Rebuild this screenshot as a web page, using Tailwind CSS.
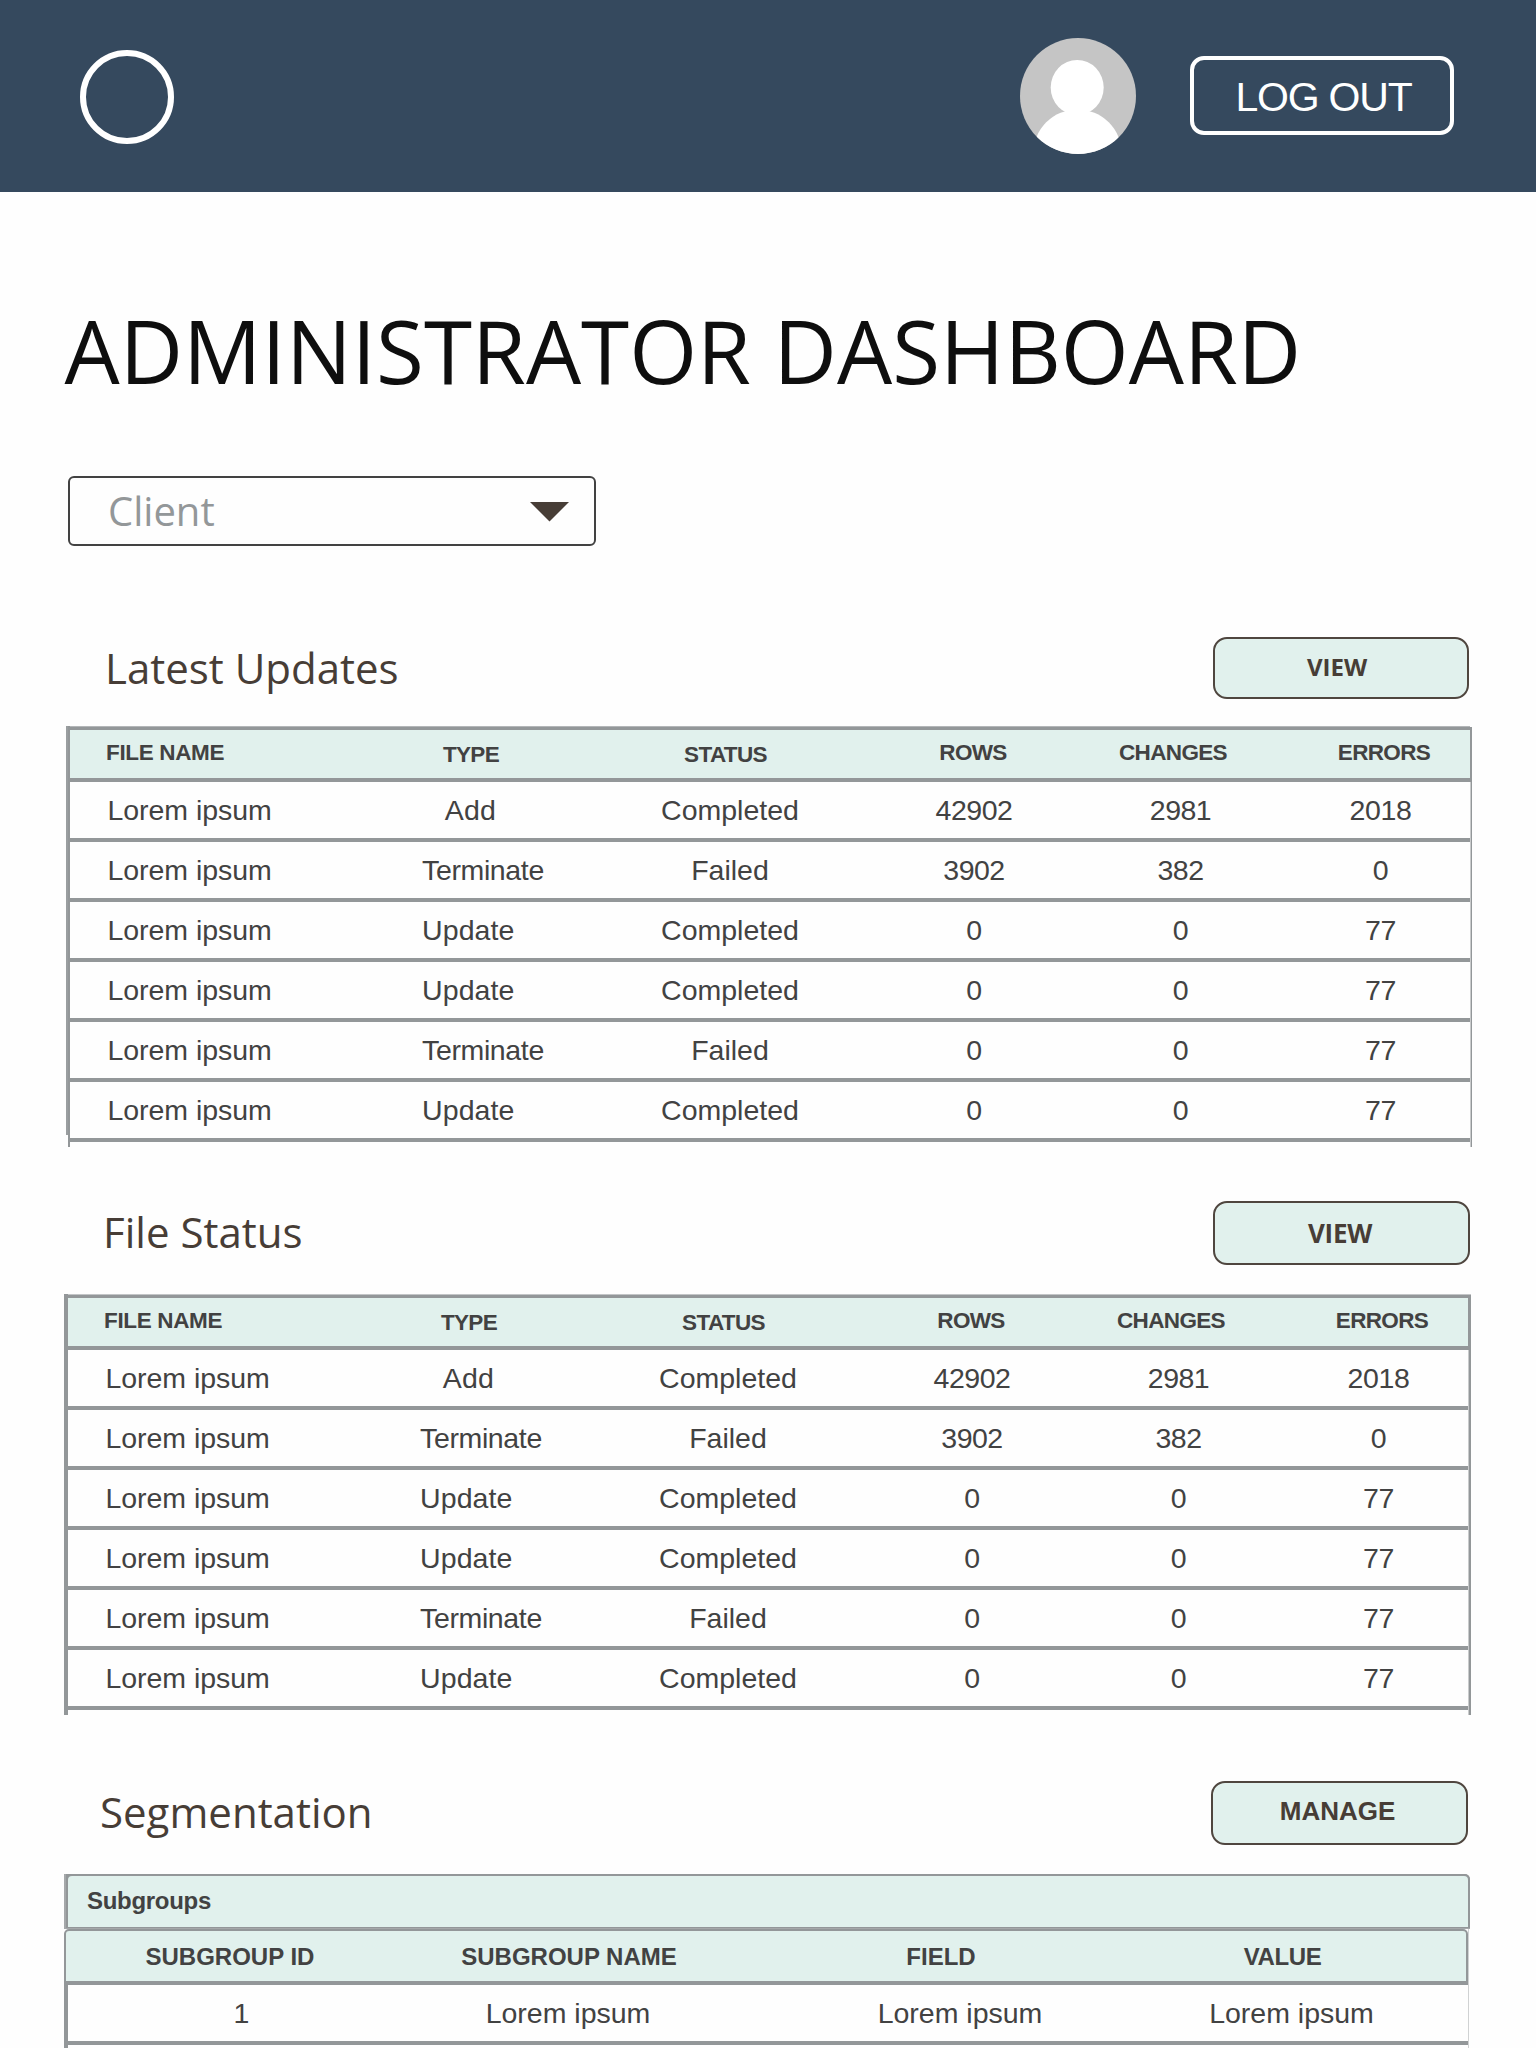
<!DOCTYPE html>
<html lang="en">
<head>
<meta charset="utf-8">
<title>Administrator Dashboard</title>
<script src="https://cdn.jsdelivr.net/npm/@tailwindcss/browser@4"></script>
</head>
<body class="bg-[#fefefe] font-['Liberation_Sans',Arial,sans-serif] text-[#424242]">
<div class="h-[2048px] w-[1536px] overflow-hidden whitespace-nowrap">

  <header class="flex h-48 items-center bg-[#35495e] pr-[82px] pl-20">
    <div class="mt-0.5 size-[94px] rounded-full border-6 border-white"></div>
    <svg class="ml-auto size-[116px]" viewBox="0 0 116 116">
      <defs><clipPath id="disc"><circle cx="58" cy="58" r="58"/></clipPath></defs>
      <g clip-path="url(#disc)">
        <rect width="116" height="116" fill="#c5c5c5"/>
        <ellipse cx="57.2" cy="49.5" rx="26.5" ry="27.5" fill="#fff"/>
        <circle cx="57.5" cy="115.6" r="44.2" fill="#fff"/>
      </g>
    </svg>
    <button class="mb-px ml-[54px] flex h-[79px] w-[264px] items-center justify-center rounded-[14px] border-4 border-white pt-1 pl-[3px] text-[41px] leading-none tracking-[-1.2px] text-white">LOG OUT</button>
  </header>

  <main>
    <h1 class="mt-[111px] ml-[64.5px] font-['Open_Sans',sans-serif] text-[87.3px] leading-[96px] text-[#0e0e0e]">ADMINISTRATOR DASHBOARD</h1>

    <div class="mt-[77px] ml-[68px] flex h-[70px] w-[528px] items-center justify-between rounded-md border-2 border-[#424242] pr-[25px] pl-[38px]">
      <span class="font-['Open_Sans',sans-serif] text-[40px] leading-none text-[#939799]">Client</span>
      <svg class="mt-px h-5 w-[39px]" viewBox="0 0 39 20"><path d="M0 0H39L19.5 19.5Z" fill="#473d36"/></svg>
    </div>

    <section class="mt-[91px]">
      <div class="ml-[105px] flex h-[62px] w-[1364px] items-center justify-between">
        <h2 class="font-['Open_Sans',sans-serif] text-[42px] leading-none text-[#473d36]">Latest Updates</h2>
        <button class="flex h-[62px] w-64 items-center justify-center rounded-[14px] border-2 border-[#4f463f] bg-[#e1f1ed] pr-2 pb-0.5 font-['Open_Sans',sans-serif] text-2xl leading-none font-bold text-[#473d36]">VIEW</button>
      </div>
      <div class="relative mt-[27px] ml-[68px] h-[421px] w-[1404px] border-l-2 border-[#939799]">
        <div class="absolute top-0 -left-1 h-[409px] w-0.5 bg-[#9a9ea0]"></div>
        <div class="h-px w-[1400px] bg-[#b3b6b8]"></div>
        <div class="h-[3px] w-[1402px] bg-[#939799]"></div>
        <div class="file-head border-r-2 border-[#939799]"></div>
        <div class="border-r border-[#939799]"><div class="file-body h-[365px] border-r border-[#c9cbcc]"></div></div>
      </div>
    </section>

    <section class="mt-[54px]">
      <div class="ml-[103px] flex h-16 w-[1367px] items-center justify-between">
        <h2 class="pb-0.5 font-['Open_Sans',sans-serif] text-[42px] leading-none text-[#473d36]">File Status</h2>
        <button class="flex h-16 w-[257px] items-center justify-center rounded-[14px] border-2 border-[#4f463f] bg-[#e1f1ed] pr-[3px] font-['Open_Sans',sans-serif] text-[26px] leading-none font-bold tracking-[-0.3px] text-[#473d36]">VIEW</button>
      </div>
      <div class="mt-[29px] ml-16 h-[421px] w-[1407px] border-l-4 border-[#939799]">
        <div class="h-px bg-[#c3c5c7]"></div>
        <div class="h-[3px] bg-[#939799]"></div>
        <div class="file-head border-r-3 border-[#939799]"></div>
        <div class="border-r-2 border-[#939799]"><div class="file-body h-[365px] border-r border-[#c9cbcc]"></div></div>
      </div>
    </section>

    <section class="mt-[66px]">
      <div class="ml-[100px] flex h-16 w-[1368px] items-center justify-between">
        <h2 class="pb-[3px] font-['Open_Sans',sans-serif] text-[42px] leading-none text-[#473d36]">Segmentation</h2>
        <button class="flex h-16 w-[257px] items-center justify-center rounded-[14px] border-2 border-[#4f463f] bg-[#e1f1ed] pr-1 pb-1 text-[26px] leading-none font-bold text-[#473d36]">MANAGE</button>
      </div>
      <div class="mt-[29px] ml-16 w-[1406px]">
        <div class="h-[55px] rounded-tr-[5px] border-b border-l-2 border-[#a5a8aa] bg-[#939799]">
          <div class="flex h-[54px] items-center rounded-t-[6px] border-2 border-b border-[#939799] bg-[#e1f1ed] pb-0.5 pl-[19px] text-2xl leading-none font-bold tracking-[-0.3px]">Subgroups</div>
        </div>
        <div class="w-[1405px] border-r border-[#d0d2d3]">
          <div class="grid h-14 grid-cols-[329px_348px_396px_288px] items-center rounded-t-[5px] border-2 border-b-4 border-[#939799] bg-[#e1f1ed] pt-px text-center text-2xl leading-none font-bold">
            <div class="pr-px">SUBGROUP ID</div><div>SUBGROUP NAME</div><div>FIELD</div><div class="pr-px tracking-[-0.4px]">VALUE</div>
          </div>
          <div class="h-[63px] border-l-4 border-[#939799]">
            <div class="grid h-15 grid-cols-[345px_308px_476px_187px] items-center border-b-4 border-[#939799] pl-px text-center text-[28.5px] leading-none">
              <div>1</div><div>Lorem ipsum</div><div>Lorem ipsum</div><div>Lorem ipsum</div>
            </div>
          </div>
        </div>
      </div>
    </section>
  </main>
</div>

<script>
  const rows = [
    ['Add', 'Completed', '42902', '2981', '2018'],
    ['Terminate', 'Failed', '3902', '382', '0'],
    ['Update', 'Completed', '0', '0', '77'],
    ['Update', 'Completed', '0', '0', '77'],
    ['Terminate', 'Failed', '0', '0', '77'],
    ['Update', 'Completed', '0', '0', '77'],
  ];
  const typeClass = {
    Add: 'w-[101px] text-center tracking-[0.2px]',
    Terminate: 'pl-0.5 tracking-[-0.36px]',
    Update: 'pl-0.5 tracking-[0.1px]',
  };
  const head = `
    <div class="grid h-[52px] grid-cols-[350px_210px_200px_289px_124px_227px] items-center border-b-4 border-[#939799] bg-[#e1f1ed] pt-0.5 text-center text-[22.5px] leading-none font-bold tracking-[-0.65px]">
      <div class="pb-1 pl-[36px] text-left tracking-[-0.34px]">FILE NAME</div>
      <div class="w-[102px]">TYPE</div>
      <div class="pr-[9px]">STATUS</div>
      <div class="pr-[3px] pb-1">ROWS</div>
      <div class="pr-[16px] pb-1">CHANGES</div>
      <div class="pb-1 pl-[55px]">ERRORS</div>
    </div>`;
  const body = rows.map(([type, status, n, changes, errors]) => `
    <div class="grid h-15 grid-cols-[350px_210px_200px_289px_124px_227px] items-center border-b-4 border-[#939799] text-center text-[28.5px] leading-none">
      <div class="pl-[37.5px] text-left tracking-[-0.05px]">Lorem ipsum</div>
      <div class="text-left"><div class="${typeClass[type]}">${type}</div></div>
      <div>${status}</div>
      <div class="pr-px tracking-[-0.5px]">${n}</div>
      <div class="pr-px tracking-[-0.5px]">${changes}</div>
      <div class="pl-[48px] tracking-[-0.3px]">${errors}</div>
    </div>`).join('');
  document.querySelectorAll('.file-head').forEach(el => { el.innerHTML = head; });
  document.querySelectorAll('.file-body').forEach(el => { el.innerHTML = body; });
</script>
</body>
</html>
